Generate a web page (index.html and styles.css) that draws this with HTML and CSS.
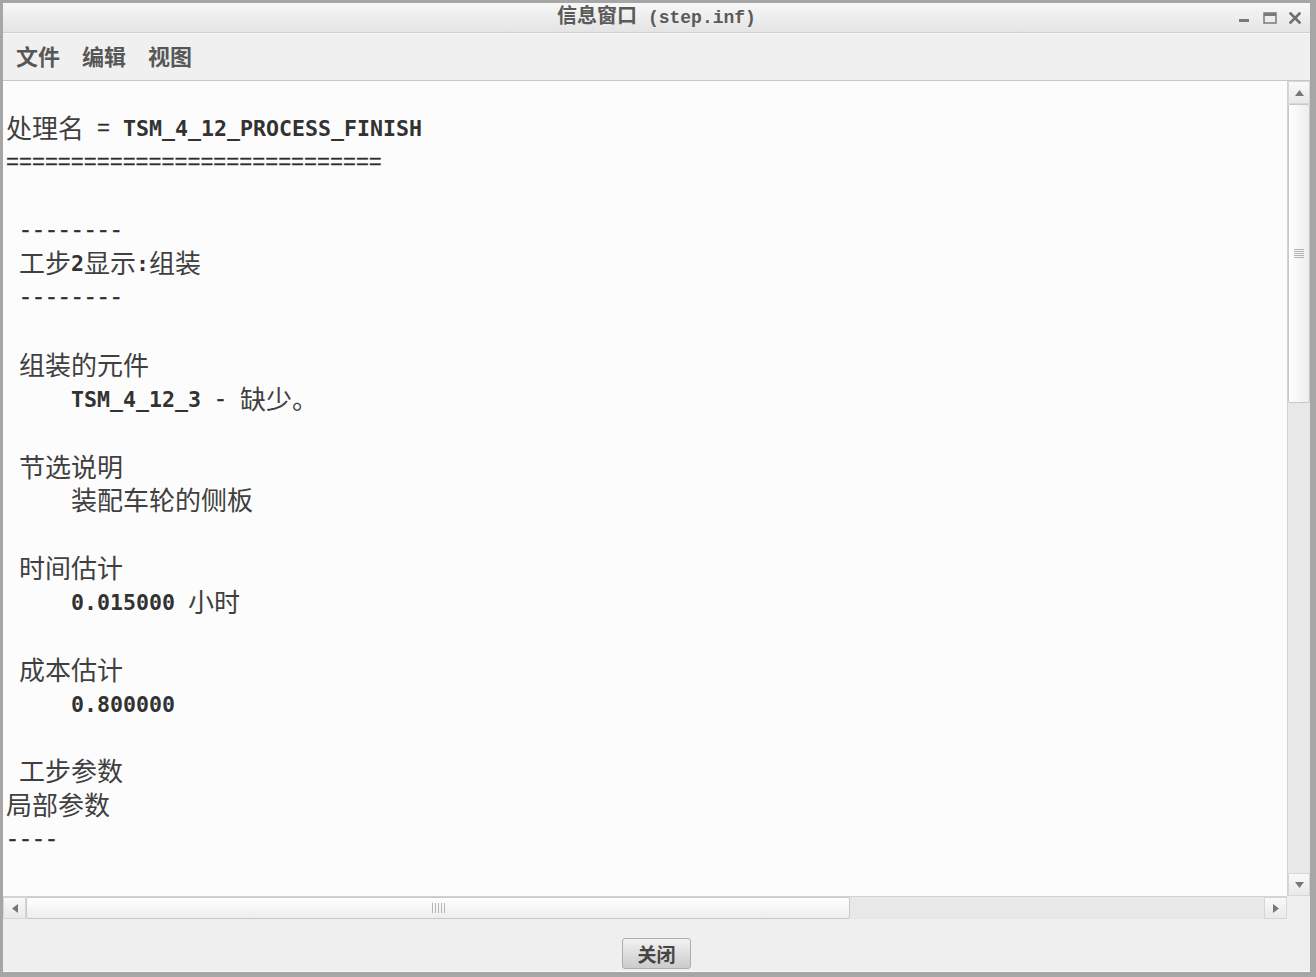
FILE: index.html
```html
<!DOCTYPE html>
<html lang="zh-CN">

<head>
    <meta charset="UTF-8">
    <title>信息窗口 (step.inf)</title>
    <link rel="stylesheet" href="styles.css">
</head>

<body>
    <div class="window">
        <div class="titlebar">
            <div></div>
            <div class="title"><span class="title-cn">信息窗口</span> (step.inf)</div>
            <div class="controls">
                <svg class="ctl-min" width="12" height="12" viewBox="0 0 12 12"><rect x="1" y="7" width="10" height="3" fill="#7a7a7a"/></svg>
                <svg class="ctl-max" width="14" height="12" viewBox="0 0 14 12"><rect x="1" y="1" width="12" height="10" fill="none" stroke="#7a7a7a" stroke-width="1.5"/><rect x="1" y="1" width="12" height="3" fill="#7a7a7a"/></svg>
                <svg class="ctl-close" width="12" height="12" viewBox="0 0 12 12"><path d="M1.5 1.5 L10.5 10.5 M10.5 1.5 L1.5 10.5" stroke="#6e6e6e" stroke-width="2.6" stroke-linecap="square"/></svg>
            </div>
        </div>

        <div class="menubar">
            <span>文件</span>
            <span>编辑</span>
            <span>视图</span>
        </div>

        <div class="main">
<pre class="out"><span class="cn">处理名</span><span class="sep"> = </span>TSM_4_12_PROCESS_FINISH
<span class="sep">=============================</span>

<span class="sep"> --------</span>
 <span class="cn">工步</span>2<span class="cn">显示</span>:<span class="cn">组装</span>
<span class="sep"> --------</span>

 <span class="cn">组装的元件</span>
     TSM_4_12_3<span class="sep"> - </span><span class="cn">缺少。</span>

 <span class="cn">节选说明</span>
     <span class="cn">装配车轮的侧板</span>

 <span class="cn">时间估计</span>
     0.015000 <span class="cn">小时</span>

 <span class="cn">成本估计</span>
     0.800000

 <span class="cn">工步参数</span>
<span class="cn">局部参数</span>
<span class="sep">----</span></pre>

            <div class="vscroll">
                <div class="arrow"><svg width="9" height="6" viewBox="0 0 9 6"><polygon points="4.5,0 9,6 0,6" fill="#777"/></svg></div>
                <div class="vthumb">
                    <svg width="10" height="9" viewBox="0 0 10 9"><path d="M0 0.5H10M0 2.5H10M0 4.5H10M0 6.5H10M0 8.5H10" stroke="#b4b4b4" stroke-width="1"/></svg>
                </div>
                <div class="track"></div>
                <div class="arrow"><svg width="9" height="6" viewBox="0 0 9 6"><polygon points="0,0 9,0 4.5,6" fill="#777"/></svg></div>
            </div>

            <div class="hscroll">
                <div class="arrow"><svg width="6" height="9" viewBox="0 0 6 9"><polygon points="6,0 6,9 0,4.5" fill="#777"/></svg></div>
                <div class="hthumb">
                    <svg width="13" height="10" viewBox="0 0 13 10"><path d="M0.5 0V10M3.5 0V10M6.5 0V10M9.5 0V10M12.5 0V10" stroke="#b4b4b4" stroke-width="1"/></svg>
                </div>
                <div class="track"></div>
                <div class="arrow"><svg width="6" height="9" viewBox="0 0 6 9"><polygon points="0,0 6,4.5 0,9" fill="#777"/></svg></div>
            </div>

            <div class="corner"></div>
        </div>

        <div class="footer">
            <button class="btn">关闭</button>
        </div>
    </div>
</body>

</html>
```

FILE: styles.css
```css
* {
    margin: 0;
    padding: 0;
    box-sizing: border-box;
}

body {
    width: 1316px;
    height: 977px;
    overflow: hidden;
    background: #ffffff;
}

.window {
    width: 1316px;
    height: 977px;
    border: 3px solid #a6a6a6;
    border-right-width: 6px;
    border-bottom-width: 5px;
    display: flex;
    flex-direction: column;
    background: #efefef;
}

/* barre de titre */
.titlebar {
    height: 30px;
    flex: none;
    display: grid;
    grid-template-columns: 1fr auto 1fr;
    align-items: center;
    background: linear-gradient(#f7f7f7, #e4e4e4);
    border-bottom: 1px solid #d0d0d0;
}

.title {
    font-family: "Liberation Mono", "Noto Sans CJK SC", monospace;
    font-size: 18px;
    font-weight: bold;
    color: #5a5a5a;
    white-space: pre;
    line-height: 24px;
}

.title-cn {
    font-family: "Noto Sans CJK SC", sans-serif;
    font-size: 20px;
    font-weight: 700;
    line-height: 20px;
}

.controls {
    justify-self: end;
    display: flex;
    align-items: center;
    padding-right: 9px;
}

.controls svg {
    display: block;
}

.ctl-max {
    margin-left: 13px;
}

.ctl-close {
    margin-left: 12px;
}

/* menu */
.menubar {
    height: 48px;
    flex: none;
    display: flex;
    align-items: center;
    gap: 22px;
    padding-left: 13px;
    padding-bottom: 4px;
    background: #f0f0f0;
    border-top: 1px solid #fafafa;
    border-bottom: 1px solid #c6c6c6;
    font-family: "Noto Sans CJK SC", sans-serif;
    font-size: 22px;
    font-weight: 700;
    color: #575757;
}

/* zone de texte + barres de defilement */
.main {
    height: 838px;
    flex: none;
    display: grid;
    grid-template-columns: 1fr 23px;
    grid-template-rows: 1fr 23px;
}

.out {
    background: #fcfcfc;
    padding: 31px 0 0 3px;
    overflow: hidden;
    font-family: "DejaVu Sans Mono", monospace;
    font-size: 21.6px;
    font-weight: bold;
    line-height: 33.86px;
    color: #323232;
}

.cn {
    font-family: "Noto Sans CJK SC", sans-serif;
    font-size: 26px;
    font-weight: 400;
    line-height: 26px;
    vertical-align: -2px;
    color: #404040;
}

.sep {
    font-family: "Liberation Mono", monospace;
    font-weight: normal;
    line-height: 20px;
    vertical-align: 1px;
    color: #2e2e2e;
    -webkit-text-stroke: 0.4px #2e2e2e;
}

.vscroll {
    display: flex;
    flex-direction: column;
    background: #e8e8e8;
    border-left: 1px solid #d2d2d2;
}

.hscroll {
    display: flex;
    background: #e8e8e8;
    border-top: 1px solid #d2d2d2;
}

.arrow {
    width: 23px;
    height: 23px;
    flex: none;
    display: flex;
    align-items: center;
    justify-content: center;
    background: linear-gradient(#f9f9f9, #e9e9e9);
    border: 1px solid #d6d6d6;
}

.vscroll .arrow {
    width: 22px;
}

.hscroll .arrow {
    height: 22px;
}

.vthumb {
    height: 299px;
    flex: none;
    display: flex;
    align-items: center;
    justify-content: center;
    background: linear-gradient(90deg, #ffffff, #ededed);
    border: 1px solid #c8c8c8;
    border-radius: 2px;
}

.hthumb {
    width: 824px;
    flex: none;
    display: flex;
    align-items: center;
    justify-content: center;
    background: linear-gradient(#ffffff, #ededed);
    border: 1px solid #c8c8c8;
    border-radius: 2px;
}

.track {
    flex: 1;
}

.corner {
    background: #efefef;
}

/* bas de fenetre */
.footer {
    flex: 1;
    display: flex;
    justify-content: center;
    padding-top: 19px;
    border-bottom: 1px solid #fafafa;
}

.btn {
    width: 69px;
    height: 31px;
    border: 1px solid #adadad;
    border-radius: 3px;
    background: linear-gradient(#f2f2f2, #cbcbcb);
    font-family: "Noto Sans CJK SC", sans-serif;
    font-size: 19px;
    font-weight: 700;
    color: #454545;
    cursor: pointer;
}
```
